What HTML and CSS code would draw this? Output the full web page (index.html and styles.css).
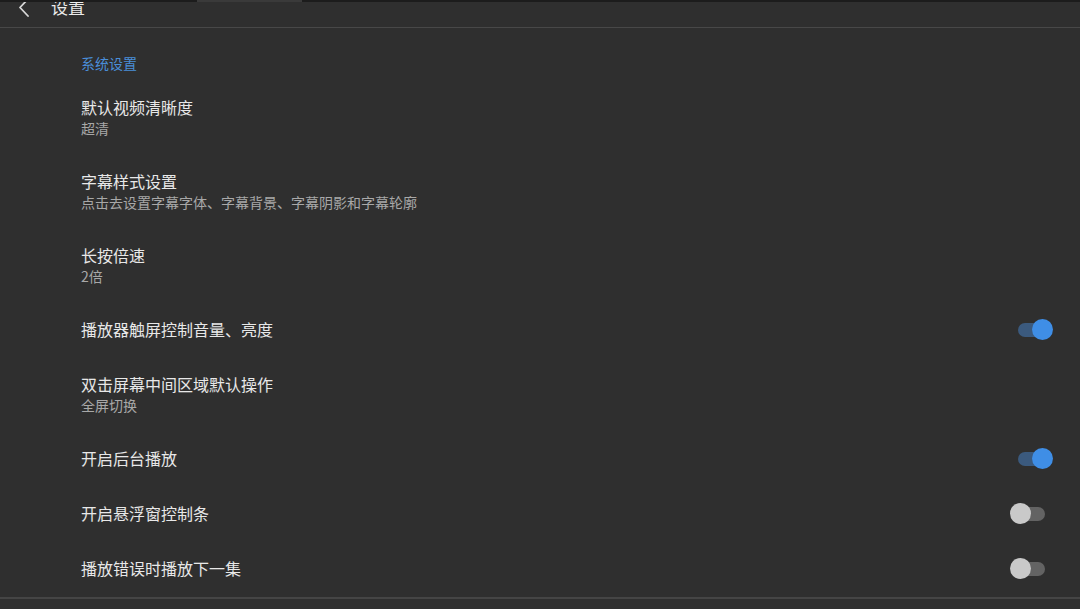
FILE: index.html
```html
<!DOCTYPE html>
<html lang="zh-CN">
<head>
    <meta charset="UTF-8">
    <meta name="viewport" content="width=device-width, initial-scale=1.0">
    <title>设置</title>
    <link rel="stylesheet" href="styles.css">
</head>
<body>

<div class="top-strip"><span class="top-strip-tab"></span></div>

<header class="toolbar">
    <svg class="back-icon" width="14" height="20" viewBox="0 0 14 20">
        <polyline points="11,1 3,9.5 11,18" fill="none" stroke="#d8d8d8" stroke-width="1.8" stroke-linecap="round" stroke-linejoin="round"/>
    </svg>
    <span class="toolbar-title">设置</span>
</header>

<main class="settings">
    <div class="section-title">系统设置</div>

    <div class="setting-row">
        <div class="setting-text">
            <div class="setting-name">默认视频清晰度</div>
            <div class="setting-value">超清</div>
        </div>
    </div>

    <div class="setting-row">
        <div class="setting-text">
            <div class="setting-name">字幕样式设置</div>
            <div class="setting-value">点击去设置字幕字体、字幕背景、字幕阴影和字幕轮廓</div>
        </div>
    </div>

    <div class="setting-row">
        <div class="setting-text">
            <div class="setting-name">长按倍速</div>
            <div class="setting-value">2倍</div>
        </div>
    </div>

    <div class="setting-row single">
        <div class="setting-name">播放器触屏控制音量、亮度</div>
        <span class="switch on"><span class="switch-thumb"></span></span>
    </div>

    <div class="setting-row">
        <div class="setting-text">
            <div class="setting-name">双击屏幕中间区域默认操作</div>
            <div class="setting-value">全屏切换</div>
        </div>
    </div>

    <div class="setting-row single">
        <div class="setting-name">开启后台播放</div>
        <span class="switch on"><span class="switch-thumb"></span></span>
    </div>

    <div class="setting-row single">
        <div class="setting-name">开启悬浮窗控制条</div>
        <span class="switch"><span class="switch-thumb"></span></span>
    </div>

    <div class="setting-row single">
        <div class="setting-name">播放错误时播放下一集</div>
        <span class="switch"><span class="switch-thumb"></span></span>
    </div>
</main>

<div class="bottom-line"></div>

</body>
</html>
```

FILE: styles.css
```css
html, body {
    height: 100%;
}
body {
    margin: 0;
    background-color: #2f2f2f;
    color: #e6e6e6;
    font-family: "Noto Sans CJK SC", "Noto Sans", sans-serif;
    overflow: hidden;
    position: relative;
}

/* thin dark band at the very top, with a lighter tab */
.top-strip {
    position: absolute;
    top: 0;
    left: 0;
    right: 0;
    height: 2px;
    background-color: #1c1c1c;
}
.top-strip-tab {
    position: absolute;
    left: 197px;
    width: 105px;
    top: 0;
    height: 2px;
    background-color: #3a3a3a;
}

/* toolbar */
.toolbar {
    height: 27px;
    display: flex;
    align-items: flex-start;
    border-bottom: 1px solid #484848;
    box-sizing: content-box;
}
.back-icon {
    margin-left: 17px;
    margin-top: -2px;
}
.toolbar-title {
    margin-left: 20px;
    margin-top: -3px;
    font-size: 17px;
    line-height: 20px;
    color: #ececec;
}

/* settings list */
.settings {
    padding-left: 81px;
    padding-right: 35px;
}
.section-title {
    color: #4a8ed8;
    font-size: 14px;
    line-height: 18px;
    padding-top: 26px;
    padding-bottom: 8px;
}
.setting-row {
    display: flex;
    align-items: center;
    justify-content: space-between;
    padding: 17px 0;
}
.setting-row.single {
    height: 21px;
}
.setting-name {
    font-size: 16px;
    line-height: 21px;
    color: #e8e8e8;
}
.setting-value {
    font-size: 14px;
    line-height: 18px;
    margin-top: 1px;
    color: #a8a8a8;
}

/* switches */
.switch {
    position: relative;
    width: 27px;
    height: 14px;
    border-radius: 7px;
    background-color: #636363;
}
.switch-thumb {
    position: absolute;
    top: -3.5px;
    left: -8px;
    width: 21px;
    height: 21px;
    border-radius: 50%;
    background-color: #c9c9c9;
}
.switch.on {
    background-color: #3b5a7e;
}
.switch.on .switch-thumb {
    left: 14px;
    background-color: #3f8ee6;
}

.bottom-line {
    position: absolute;
    left: 0;
    right: 0;
    top: 597px;
    height: 2px;
    background-color: #454545;
}
```
